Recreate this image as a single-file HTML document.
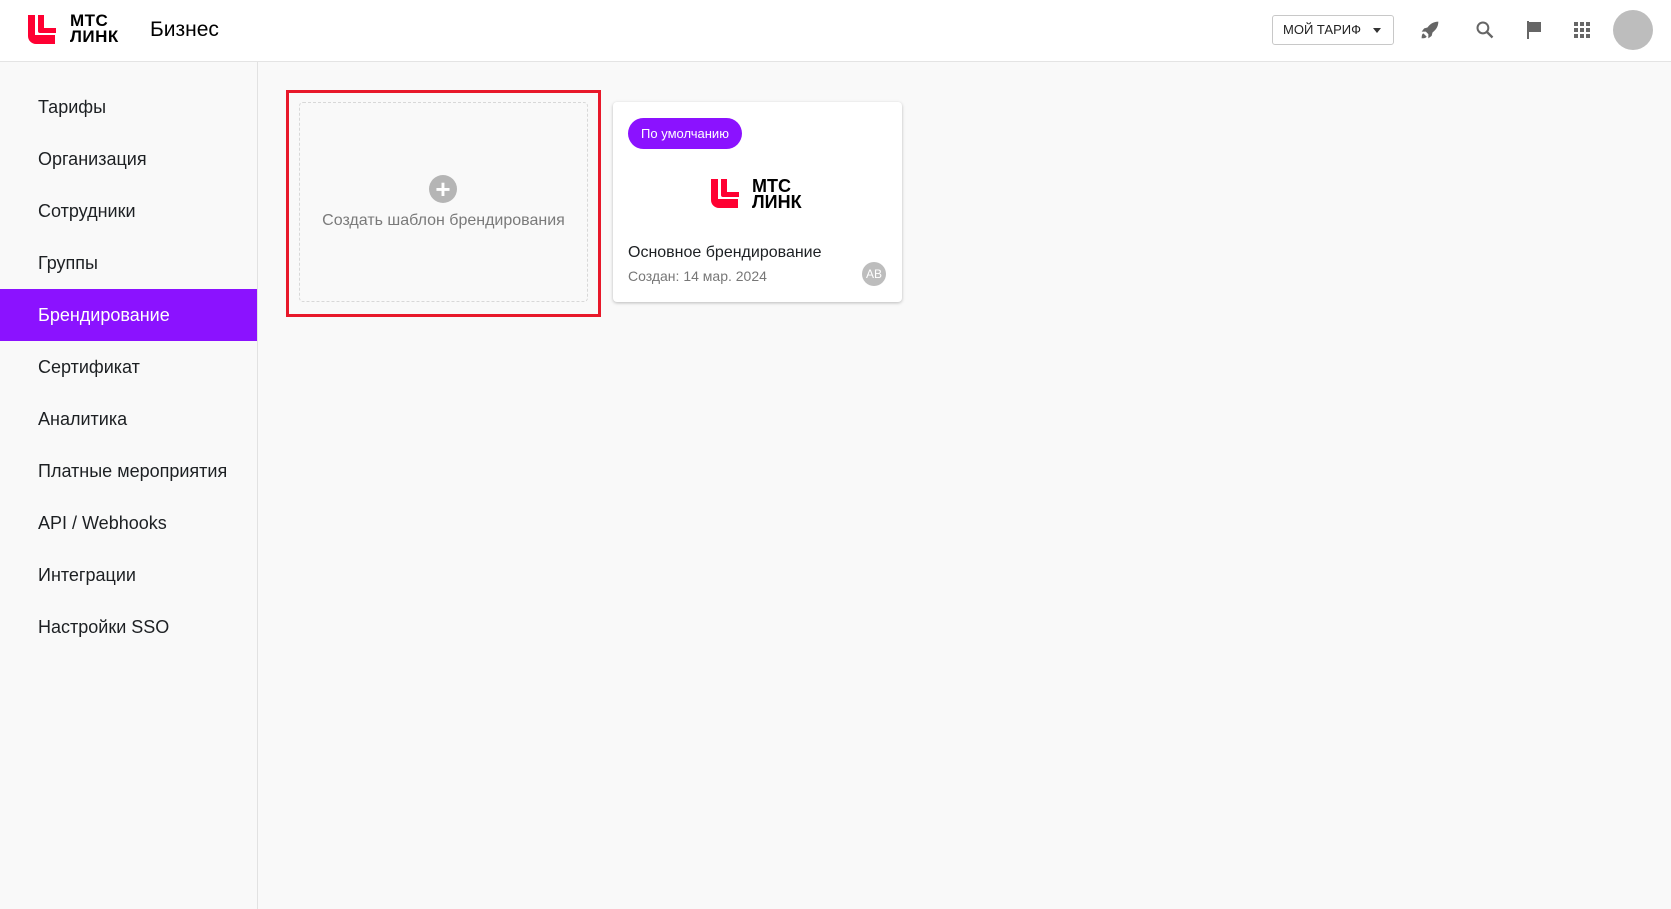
<!DOCTYPE html>
<html><head><meta charset="utf-8"><style>
*{margin:0;padding:0;box-sizing:border-box}
body{width:1671px;height:909px;background:#f9f9f9;font-family:"Liberation Sans",sans-serif;position:relative;overflow:hidden;color:#1d2023}
.hdr{position:absolute;left:0;top:0;width:1671px;height:62px;background:#fff;border-bottom:1px solid #e4e4e4}
.side{position:absolute;left:0;top:62px;width:258px;height:847px;background:#f9f9f9;border-right:1px solid #e2e2e2}
.it{position:absolute;left:0;width:257px;height:52px;line-height:52px;padding-left:38px;font-size:18px}
.act{background:#8b12ff;color:#fff}
.abs{position:absolute}
</style></head><body>
<div class="hdr">
<svg class="abs" style="left:28px;top:15px" width="28" height="29" viewBox="0 0 28 29"><path d="M0 0h7v20h20v9H8A8 8 0 0 1 0 21z" fill="#ff0032"/><path d="M10 0h6v13h12v5H12a2 2 0 0 1-2-2z" fill="#ff0032"/></svg>
<div class="abs" style="left:70px;top:13px;font-size:17px;font-weight:bold;line-height:16px;letter-spacing:0.5px;color:#000">МТС<br>ЛИНК</div>
<div class="abs" style="left:150px;top:18px;font-size:21px;color:#000">Бизнес</div>
<div class="abs" style="left:1272px;top:15px;width:122px;height:30px;border:1px solid #c8c8c8;border-radius:3px;font-size:13px;line-height:28px;padding-left:10px;color:#222">МОЙ ТАРИФ<span style="position:absolute;right:12px;top:12px;border-left:4px solid transparent;border-right:4px solid transparent;border-top:5px solid #333"></span></div>
<svg class="abs" style="left:1420px;top:20px" width="20" height="20" viewBox="0 0 24 24"><path d="M22 2c-6 0-10 3-13 7l-4 1-3 4 5 0 3 3 0 5 4-3 1-4c4-3 7-7 7-13zM4 16c-2 1-2 4-2 6 2 0 5 0 6-2z" fill="#666"/></svg>
<svg class="abs" style="left:1475px;top:20px" width="20" height="20" viewBox="0 0 24 24"><circle cx="9.5" cy="9.5" r="6.5" fill="none" stroke="#666" stroke-width="2.4"/><path d="M14 14l7 7" stroke="#666" stroke-width="2.8"/></svg>
<svg class="abs" style="left:1526px;top:21px" width="16" height="18" viewBox="0 0 16 18"><path d="M1 0h2v18H1zM3 1h12v10H3z" fill="#666"/></svg>
<svg class="abs" style="left:1574px;top:22px" width="16" height="16" viewBox="0 0 16 16" fill="#666"><rect x="0" y="0" width="4" height="4"/><rect x="6" y="0" width="4" height="4"/><rect x="12" y="0" width="4" height="4"/><rect x="0" y="6" width="4" height="4"/><rect x="6" y="6" width="4" height="4"/><rect x="12" y="6" width="4" height="4"/><rect x="0" y="12" width="4" height="4"/><rect x="6" y="12" width="4" height="4"/><rect x="12" y="12" width="4" height="4"/></svg>
<div class="abs" style="left:1613px;top:10px;width:40px;height:40px;border-radius:50%;background:#bdbdbd"></div>
</div>
<div class="side">
<div class="it" style="top:19px">Тарифы</div>
<div class="it" style="top:71px">Организация</div>
<div class="it" style="top:123px">Сотрудники</div>
<div class="it" style="top:175px">Группы</div>
<div class="it act" style="top:227px">Брендирование</div>
<div class="it" style="top:279px">Сертификат</div>
<div class="it" style="top:331px">Аналитика</div>
<div class="it" style="top:383px">Платные мероприятия</div>
<div class="it" style="top:435px">API / Webhooks</div>
<div class="it" style="top:487px">Интеграции</div>
<div class="it" style="top:539px">Настройки SSO</div>
</div>
<div class="abs" style="left:286px;top:90px;width:315px;height:227px;border:3px solid #e8182a"></div>
<div class="abs" style="left:299px;top:102px;width:289px;height:200px;border:1px dashed #d8d8d8;border-radius:4px"></div>
<div class="abs" style="left:429px;top:175px;width:28px;height:28px;border-radius:50%;background:#b5b5b5;color:#fff;font-size:26px;line-height:28px;text-align:center;font-weight:bold">+</div>
<div class="abs" style="left:299px;top:212px;width:289px;text-align:center;font-size:16px;color:#7a7a7a;white-space:nowrap">Создать шаблон брендирования</div>
<div class="abs" style="left:613px;top:102px;width:289px;height:200px;background:#fff;border-radius:4px;box-shadow:0 1px 3px rgba(0,0,0,.25)"></div>
<div class="abs" style="left:628px;top:118px;width:114px;height:31px;border-radius:16px;background:#8b12ff;color:#fff;font-size:13px;line-height:31px;text-align:center">По умолчанию</div>
<svg class="abs" style="left:711px;top:179px" width="28" height="29" viewBox="0 0 28 29"><path d="M0 0h7v20h20v9H8A8 8 0 0 1 0 21z" fill="#ff0032"/><path d="M10 0h6v13h12v5H12a2 2 0 0 1-2-2z" fill="#ff0032"/></svg>
<div class="abs" style="left:752px;top:178px;font-size:18px;font-weight:bold;line-height:16px;color:#000">МТС<br>ЛИНК</div>
<div class="abs" style="left:628px;top:244px;font-size:16px;color:#1d2023">Основное брендирование</div>
<div class="abs" style="left:628px;top:268px;font-size:14px;color:#777">Создан: 14 мар. 2024</div>
<div class="abs" style="left:862px;top:262px;width:24px;height:24px;border-radius:50%;background:#bdbdbd;color:#fff;font-size:12px;line-height:24px;text-align:center">AB</div>
</body></html>
